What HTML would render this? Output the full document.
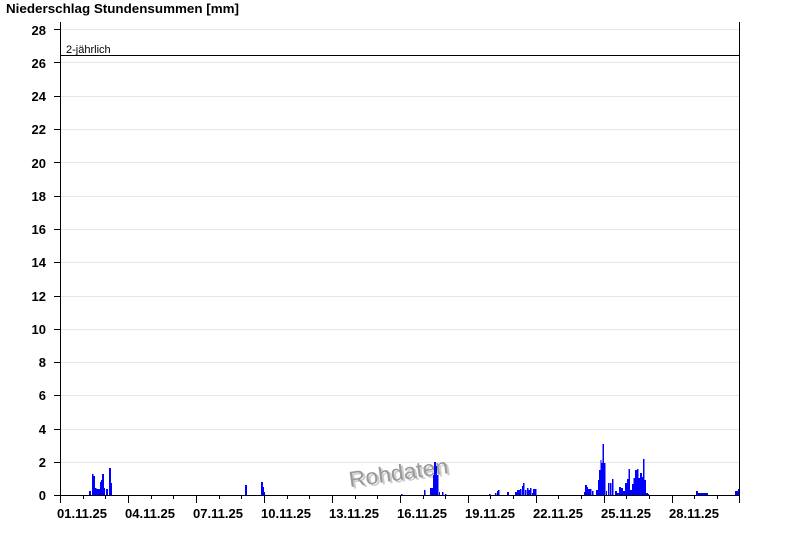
<!DOCTYPE html>
<html><head><meta charset="utf-8"><style>
html,body{margin:0;padding:0;background:#fff;width:800px;height:550px;overflow:hidden}
svg{display:block}
text{font-family:"Liberation Sans",Arial,sans-serif}
</style></head><body>
<svg width="800" height="550" xmlns="http://www.w3.org/2000/svg">
<text x="6" y="13" font-size="13" font-weight="bold" textLength="233" lengthAdjust="spacingAndGlyphs">Niederschlag Stundensummen [mm]</text>
<g stroke="#e6e6e6" stroke-width="1">
<line x1="60" x2="740" y1="29.5" y2="29.5"/><line x1="60" x2="740" y1="62.5" y2="62.5"/><line x1="60" x2="740" y1="96.5" y2="96.5"/><line x1="60" x2="740" y1="129.5" y2="129.5"/><line x1="60" x2="740" y1="162.5" y2="162.5"/><line x1="60" x2="740" y1="196.5" y2="196.5"/><line x1="60" x2="740" y1="229.5" y2="229.5"/><line x1="60" x2="740" y1="262.5" y2="262.5"/><line x1="60" x2="740" y1="296.5" y2="296.5"/><line x1="60" x2="740" y1="329.5" y2="329.5"/><line x1="60" x2="740" y1="362.5" y2="362.5"/><line x1="60" x2="740" y1="395.5" y2="395.5"/><line x1="60" x2="740" y1="429.5" y2="429.5"/><line x1="60" x2="740" y1="462.5" y2="462.5"/>
</g>
<g font-size="13" font-weight="bold" text-anchor="end">
<text x="46" y="35">28</text><text x="46" y="68">26</text><text x="46" y="101">24</text><text x="46" y="134">22</text><text x="46" y="168">20</text><text x="46" y="201">18</text><text x="46" y="234">16</text><text x="46" y="267">14</text><text x="46" y="301">12</text><text x="46" y="334">10</text><text x="46" y="367">8</text><text x="46" y="400">6</text><text x="46" y="434">4</text><text x="46" y="467">2</text><text x="46" y="500">0</text>
</g>
<g stroke="#000" stroke-width="1">
<line x1="54" x2="60" y1="29.5" y2="29.5"/><line x1="54" x2="60" y1="62.5" y2="62.5"/><line x1="54" x2="60" y1="96.5" y2="96.5"/><line x1="54" x2="60" y1="129.5" y2="129.5"/><line x1="54" x2="60" y1="162.5" y2="162.5"/><line x1="54" x2="60" y1="196.5" y2="196.5"/><line x1="54" x2="60" y1="229.5" y2="229.5"/><line x1="54" x2="60" y1="262.5" y2="262.5"/><line x1="54" x2="60" y1="296.5" y2="296.5"/><line x1="54" x2="60" y1="329.5" y2="329.5"/><line x1="54" x2="60" y1="362.5" y2="362.5"/><line x1="54" x2="60" y1="395.5" y2="395.5"/><line x1="54" x2="60" y1="429.5" y2="429.5"/><line x1="54" x2="60" y1="462.5" y2="462.5"/><line x1="54" x2="60" y1="495.5" y2="495.5"/>
</g>
<line x1="60" x2="740" y1="55.5" y2="55.5" stroke="#000"/>
<text x="66" y="53" font-size="11">2-jährlich</text>
<text x="350" y="482" font-size="22" fill="#ccc" transform="rotate(-8 400 470)" textLength="100" lengthAdjust="spacingAndGlyphs">Rohdaten</text>
<text x="348" y="480" font-size="22" fill="#999" transform="rotate(-8 400 470)" textLength="100" lengthAdjust="spacingAndGlyphs">Rohdaten</text>
<g fill="#0000ff">
<rect x="89" y="491" width="2" height="4"/><rect x="92" y="474" width="1.5" height="21"/><rect x="93.5" y="476" width="1.5" height="19"/><rect x="95" y="488" width="1.5" height="7"/><rect x="96.5" y="489" width="3.5" height="6"/><rect x="100" y="482" width="1" height="13"/><rect x="101" y="480" width="1" height="15"/><rect x="102" y="474" width="2" height="21"/><rect x="104" y="488" width="1" height="7"/><rect x="106" y="489" width="2" height="6"/><rect x="109" y="468" width="2" height="27"/><rect x="111" y="483" width="1" height="12"/>
<rect x="245" y="485" width="2" height="10"/><rect x="261" y="482" width="2" height="13"/><rect x="263" y="487" width="1" height="8"/><rect x="264" y="492" width="1" height="3"/>
<rect x="401" y="494" width="1.5" height="1"/><rect x="424" y="490" width="1.5" height="5"/><rect x="430" y="488" width="3" height="7"/><rect x="433" y="475" width="1" height="20"/><rect x="434" y="462" width="2" height="33"/><rect x="436" y="466" width="1" height="29"/><rect x="437" y="475" width="1.5" height="20"/><rect x="439" y="492" width="1" height="3"/><rect x="442" y="492" width="1.5" height="3"/><rect x="445" y="494" width="1.5" height="1"/>
<rect x="489" y="494" width="1.5" height="1"/><rect x="495" y="493" width="1.5" height="2"/><rect x="497" y="491" width="1" height="4"/><rect x="498" y="490" width="1.5" height="5"/><rect x="507" y="492" width="2" height="3"/><rect x="515" y="492" width="2" height="3"/><rect x="517" y="490" width="3" height="5"/><rect x="520" y="489" width="1.5" height="6"/><rect x="522" y="486" width="1" height="9"/><rect x="523" y="483" width="1.5" height="12"/><rect x="525" y="490" width="1.5" height="5"/><rect x="527" y="488" width="1.5" height="7"/><rect x="528.5" y="490" width="1.5" height="5"/><rect x="530" y="488" width="1.5" height="7"/><rect x="532" y="493" width="1" height="2"/><rect x="533" y="489" width="3.5" height="6"/>
<rect x="584" y="492" width="1" height="3"/><rect x="585" y="485" width="2" height="10"/><rect x="587" y="487" width="1" height="8"/><rect x="588" y="489" width="3.5" height="6"/><rect x="592" y="491" width="1.5" height="4"/><rect x="596" y="490" width="2.5" height="5"/><rect x="598" y="480" width="1" height="15"/><rect x="599" y="470" width="1.5" height="25"/><rect x="600.5" y="460" width="1" height="35"/><rect x="601.5" y="463" width="1" height="32"/><rect x="602.5" y="444" width="1.5" height="51"/><rect x="604" y="463" width="1.5" height="32"/><rect x="606" y="491" width="1" height="4"/><rect x="608" y="483" width="1.5" height="12"/><rect x="610" y="483" width="1.5" height="12"/><rect x="612" y="479" width="1.5" height="16"/><rect x="615" y="491" width="2" height="4"/><rect x="617" y="493" width="2" height="2"/><rect x="619" y="487" width="2" height="8"/><rect x="621" y="488" width="2" height="7"/><rect x="623" y="491" width="2" height="4"/><rect x="625" y="483" width="2" height="12"/><rect x="627" y="479" width="1.5" height="16"/><rect x="628.5" y="469" width="1.5" height="26"/><rect x="630" y="490" width="2" height="5"/><rect x="632" y="484" width="1.5" height="11"/><rect x="633.5" y="478" width="1.5" height="17"/><rect x="635" y="470" width="2" height="25"/><rect x="637" y="469" width="1.5" height="26"/><rect x="638.5" y="478" width="1.5" height="17"/><rect x="640" y="473" width="2" height="22"/><rect x="642" y="477" width="1" height="18"/><rect x="643" y="459" width="1.5" height="36"/><rect x="644.5" y="480" width="1.5" height="15"/><rect x="646" y="493" width="2" height="2"/><rect x="648" y="494" width="1" height="1"/>
<rect x="696" y="491" width="2" height="4"/><rect x="698" y="493" width="10" height="2"/><rect x="735" y="491" width="3" height="4"/><rect x="738" y="489" width="2" height="6"/>
</g>
<line x1="60.5" x2="60.5" y1="22" y2="496" stroke="#000"/>
<line x1="739.5" x2="739.5" y1="22" y2="496" stroke="#000"/>
<line x1="60" x2="740" y1="495.5" y2="495.5" stroke="#000"/>
<g stroke="#000" stroke-width="1">
<line x1="60.5" x2="60.5" y1="495" y2="503"/><line x1="83.5" x2="83.5" y1="495" y2="499"/><line x1="105.5" x2="105.5" y1="495" y2="499"/><line x1="128.5" x2="128.5" y1="495" y2="503"/><line x1="151.5" x2="151.5" y1="495" y2="499"/><line x1="173.5" x2="173.5" y1="495" y2="499"/><line x1="196.5" x2="196.5" y1="495" y2="503"/><line x1="219.5" x2="219.5" y1="495" y2="499"/><line x1="241.5" x2="241.5" y1="495" y2="499"/><line x1="264.5" x2="264.5" y1="495" y2="503"/><line x1="287.5" x2="287.5" y1="495" y2="499"/><line x1="309.5" x2="309.5" y1="495" y2="499"/><line x1="332.5" x2="332.5" y1="495" y2="503"/><line x1="355.5" x2="355.5" y1="495" y2="499"/><line x1="377.5" x2="377.5" y1="495" y2="499"/><line x1="400.5" x2="400.5" y1="495" y2="503"/><line x1="423.5" x2="423.5" y1="495" y2="499"/><line x1="445.5" x2="445.5" y1="495" y2="499"/><line x1="468.5" x2="468.5" y1="495" y2="503"/><line x1="490.5" x2="490.5" y1="495" y2="499"/><line x1="513.5" x2="513.5" y1="495" y2="499"/><line x1="536.5" x2="536.5" y1="495" y2="503"/><line x1="558.5" x2="558.5" y1="495" y2="499"/><line x1="581.5" x2="581.5" y1="495" y2="499"/><line x1="604.5" x2="604.5" y1="495" y2="503"/><line x1="626.5" x2="626.5" y1="495" y2="499"/><line x1="649.5" x2="649.5" y1="495" y2="499"/><line x1="672.5" x2="672.5" y1="495" y2="503"/><line x1="694.5" x2="694.5" y1="495" y2="499"/><line x1="717.5" x2="717.5" y1="495" y2="499"/><line x1="739.5" x2="739.5" y1="495" y2="503"/>
</g>
<g font-size="13" font-weight="bold">
<text x="57" y="518" textLength="50" lengthAdjust="spacingAndGlyphs">01.11.25</text><text x="125" y="518" textLength="50" lengthAdjust="spacingAndGlyphs">04.11.25</text><text x="193" y="518" textLength="50" lengthAdjust="spacingAndGlyphs">07.11.25</text><text x="261" y="518" textLength="50" lengthAdjust="spacingAndGlyphs">10.11.25</text><text x="329" y="518" textLength="50" lengthAdjust="spacingAndGlyphs">13.11.25</text><text x="397" y="518" textLength="50" lengthAdjust="spacingAndGlyphs">16.11.25</text><text x="465" y="518" textLength="50" lengthAdjust="spacingAndGlyphs">19.11.25</text><text x="533" y="518" textLength="50" lengthAdjust="spacingAndGlyphs">22.11.25</text><text x="601" y="518" textLength="50" lengthAdjust="spacingAndGlyphs">25.11.25</text><text x="669" y="518" textLength="50" lengthAdjust="spacingAndGlyphs">28.11.25</text>
</g>
</svg>
</body></html>
